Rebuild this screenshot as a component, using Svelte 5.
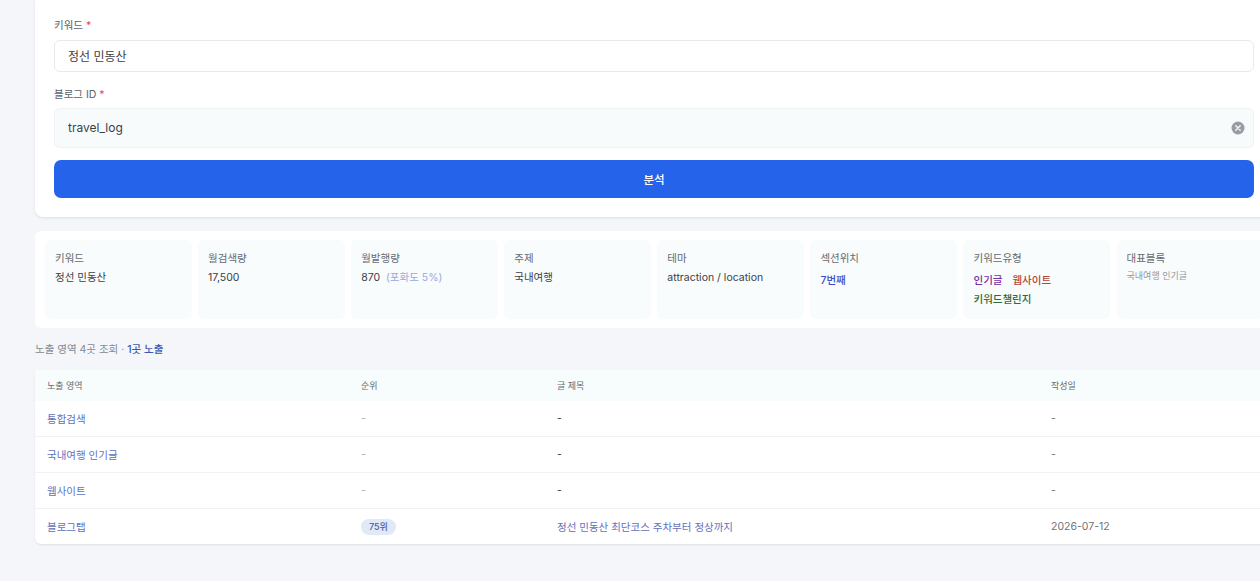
<script>
  let keyword = '정선 민동산';
  let blogId = 'travel_log';

  const rows = [
    { area: '통합검색', rank: '-', title: '-', date: '-' },
    { area: '국내여행 인기글', rank: '-', title: '-', date: '-' },
    { area: '웹사이트', rank: '-', title: '-', date: '-' },
    { area: '블로그탭', rank: '75위', title: '정선 민동산 최단코스 주차부터 정상까지', date: '2026-07-12' }
  ];
</script>

<div class="page">
  <form class="card form" on:submit|preventDefault>
    <label for="kw">키워드 <span class="req">*</span></label>
    <input id="kw" class="field" type="text" bind:value={keyword} />

    <label for="blog" class="second">블로그 ID <span class="req">*</span></label>
    <div class="blog-wrap">
      <input id="blog" class="field tall" type="text" bind:value={blogId} />
      <svg class="clear" width="14" height="14" viewBox="0 0 14 14">
        <circle cx="7" cy="7" r="6.5" fill="#9a9ca4" />
        <path d="M4.8 4.8l4.4 4.4M9.2 4.8l-4.4 4.4" stroke="#f4f5f6" stroke-width="1.4" stroke-linecap="round" />
      </svg>
    </div>

    <button type="submit">분석</button>
  </form>

  <section class="summary">
    <div class="item">
      <div class="k">키워드</div>
      <div class="v">정선 민동산</div>
    </div>
    <div class="item">
      <div class="k">월검색량</div>
      <div class="v">17,500</div>
    </div>
    <div class="item">
      <div class="k">월발행량</div>
      <div class="v">870 <span class="sat">(포화도 5%)</span></div>
    </div>
    <div class="item">
      <div class="k">주제</div>
      <div class="v">국내여행</div>
    </div>
    <div class="item">
      <div class="k">테마</div>
      <div class="v">attraction / location</div>
    </div>
    <div class="item">
      <div class="k">섹션위치</div>
      <div class="v strong blue">7번째</div>
    </div>
    <div class="item">
      <div class="k">키워드유형</div>
      <div class="types">
        <span class="purple">인기글</span>
        <span class="red">웹사이트</span>
        <span class="green">키워드챌린지</span>
      </div>
    </div>
    <div class="item">
      <div class="k">대표블록</div>
      <div class="v small">국내여행 인기글</div>
    </div>
  </section>

  <p class="note">노출 영역 4곳 조회 · <b>1곳 노출</b></p>

  <table>
    <thead>
      <tr>
        <th class="c1">노출 영역</th>
        <th class="c2">순위</th>
        <th class="c3">글 제목</th>
        <th>작성일</th>
      </tr>
    </thead>
    <tbody>
      {#each rows as row}
        <tr>
          <td class="link">{row.area}</td>
          <td class="muted">
            {#if row.rank === '-'}-{:else}<span class="badge">{row.rank}</span>{/if}
          </td>
          <td class={row.title === '-' ? 'dash' : 'link'}>{row.title}</td>
          <td class="date">{row.date}</td>
        </tr>
      {/each}
    </tbody>
  </table>
</div>

<style>
  :global(body) {
    background: #f4f6fa;
    overflow: hidden;
    font-family: Inter, "Noto Sans CJK KR", sans-serif;
    color: #33363d;
  }
  .page {
    width: 1238px;
    margin-left: 35px;
    height: 581px;
  }
  .card {
    background: #fff;
    border-radius: 0 0 8px 8px;
    box-shadow: 0 1px 3px rgba(20, 30, 50, 0.1);
  }
  .form {
    display: flex;
    flex-direction: column;
    padding: 18px 19px 19px;
    height: 217px;
    box-sizing: border-box;
  }
  label {
    font-size: 10.5px;
    line-height: 15px;
    color: #5c6068;
    margin-bottom: 7px;
  }
  label.second {
    margin-top: 15px;
    margin-bottom: 6px;
  }
  .req {
    color: #e5484d;
  }
  .field {
    display: block;
    width: 100%;
    box-sizing: border-box;
    height: 33px;
    padding: 0 13px 1px;
    border: 1px solid #e8eaee;
    border-radius: 6px;
    background: #fff;
    font: inherit;
    font-size: 12px;
    color: #3d4047;
    outline: none;
  }
  .field.tall {
    height: 40px;
    background: #f7fbfc;
    border-color: #f0f3f5;
  }
  .blog-wrap {
    position: relative;
  }
  .clear {
    position: absolute;
    right: 9px;
    top: 13px;
  }
  button {
    margin-top: 12px;
    height: 39px;
    border: none;
    border-radius: 7px;
    background: #2563eb;
    color: #fff;
    font: inherit;
    font-size: 11.5px;
    font-weight: 500;
  }
  .summary {
    display: grid;
    grid-template-columns: repeat(8, 146.9px);
    gap: 6.2px;
    margin-top: 14px;
    height: 97px;
    box-sizing: border-box;
    padding: 9px 10px;
    background: #fff;
    border-radius: 6px;
  }
  .item {
    background: #f8fcfc;
    border-radius: 6px;
    padding: 10px 10px;
    height: 79px;
    box-sizing: border-box;
  }
  .k {
    font-size: 10.5px;
    line-height: 17px;
    color: #666a72;
    margin-bottom: 2px;
  }
  .v {
    font-size: 10.5px;
    line-height: 17px;
    color: #3d4047;
  }
  .sat {
    color: #9aa8dc;
    margin-left: 3px;
  }
  .strong {
    font-weight: 500;
    margin-top: 5px;
  }
  .blue {
    color: #3b4fc4;
  }
  .small {
    font-size: 9px;
    color: #92969d;
    line-height: 13px;
  }
  .types {
    display: flex;
    flex-wrap: wrap;
    gap: 2px 10px;
    font-size: 10.5px;
    line-height: 17px;
    font-weight: 500;
    margin-top: 5px;
  }
  .purple {
    color: #7b2fa2;
  }
  .red {
    color: #b5473a;
  }
  .green {
    color: #2f6b3a;
  }
  .note {
    margin: 14px 0 0;
    font-size: 10.5px;
    line-height: 16px;
    color: #84888f;
  }
  .note b {
    color: #3a58b0;
    font-weight: 500;
  }
  table {
    width: 100%;
    margin-top: 12px;
    border-collapse: separate;
    border-spacing: 0;
    table-layout: fixed;
    background: #fff;
    border-radius: 6px;
    box-shadow: 0 1px 2px rgba(20, 30, 50, 0.1);
  }
  th,
  td {
    box-sizing: border-box;
  }
  .c1 {
    width: 314px;
  }
  .c2 {
    width: 196px;
  }
  .c3 {
    width: 494px;
  }
  th {
    height: 31px;
    padding: 0 12px;
    text-align: left;
    font-size: 9px;
    font-weight: 400;
    color: #666a72;
    background: #f7fcfc;
  }
  td {
    height: 36px;
    padding: 0 12px;
    font-size: 10.5px;
    border-bottom: 1px solid #f1f3f5;
  }
  tbody tr:last-child td {
    height: 35px;
    border-bottom: none;
  }
  .link {
    color: #5f72c0;
  }
  .muted {
    color: #a8acb2;
  }
  .dash {
    color: #33363d;
  }
  .date {
    color: #6f7379;
  }
  .badge {
    display: inline-block;
    padding: 0 8px;
    line-height: 16px;
    border-radius: 8px;
    background: #dfe9f8;
    color: #4a5f9f;
    font-size: 9px;
    font-weight: 500;
  }
</style>
